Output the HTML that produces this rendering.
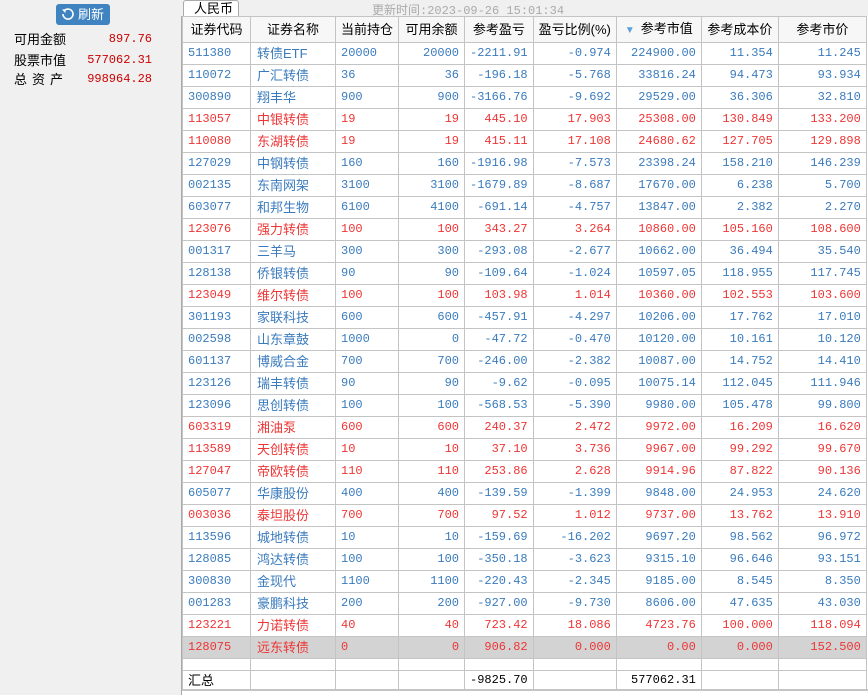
<!DOCTYPE html><html><head><meta charset="utf-8"><style>
body{margin:0;width:868px;height:695px;background:#f0f0f0;position:relative;overflow:hidden;font-family:"Liberation Sans","Noto Sans CJK SC",sans-serif;}
.btn{position:absolute;left:56px;top:4px;width:54px;height:21px;background:#3f83c1;border-radius:3px;color:#fff;font-size:13px;line-height:21px;text-align:right;box-sizing:border-box;padding-right:6px}
.btn svg{position:absolute;left:5px;top:3px}
.lbl{position:absolute;left:14px;font-size:13px;color:#000}
.val{position:absolute;right:716px;font-family:"Liberation Mono",monospace;font-size:12px;color:#c00}
.tab{position:absolute;left:183px;top:0;width:56px;height:17px;border:1px solid #aaa;border-bottom:none;border-radius:3px 3px 0 0;background:#fff;font-size:13px;line-height:16px;padding-left:10px;box-sizing:border-box}
.upd{position:absolute;left:372px;top:1px;font-size:12px;color:#aaa;font-family:"Liberation Mono","Noto Sans CJK SC",monospace}
.wrap{position:absolute;left:181px;top:16px;width:687px;height:679px;background:#fff;border-left:1px solid #aaa}
table{border-collapse:collapse;table-layout:fixed;position:absolute;left:0;top:0;background:#fff}
td,th{border:1px solid #c4c4c4;padding:0 5px;white-space:nowrap;overflow:hidden}
th{height:23px;line-height:23px;font-weight:normal;font-size:13px;background:#f7f7f7;color:#000;text-align:center}
td{height:21px;line-height:21px;font-size:12px;font-family:"Liberation Mono",monospace;color:#3a7bbd;text-align:right}
td:nth-child(1),td:nth-child(3){text-align:left}
td:nth-child(2){text-align:left;font-family:"Liberation Sans","Noto Sans CJK SC",sans-serif;font-size:13px;padding-left:6px}
tr.r td{color:#ee3535}
tr.g td{background:#d3d3d3}
tr.s td{color:#000;height:19px;line-height:19px}
tr.e td{height:11px;line-height:0;font-size:0}
.tri{color:#5aa0dc;font-size:10px;margin-right:6px}
</style></head><body>
<div class="btn"><svg width="14" height="14" viewBox="0 0 14 14"><path d="M3.5 3.5A5 5 0 1 1 2 7" fill="none" stroke="#fff" stroke-width="1.6"/><path d="M1 2.5L4.8 2.2L4.3 6Z" fill="#fff"/></svg>刷新</div>
<div class="lbl" style="top:29px">可用金额</div><div class="val" style="top:32px">897.76</div>
<div class="lbl" style="top:50px">股票市值</div><div class="val" style="top:53px">577062.31</div>
<div class="lbl" style="top:69px;letter-spacing:5px">总资产</div><div class="val" style="top:72px">998964.28</div>
<div class="tab">人民币</div>
<div class="upd">更新时间:2023-09-26 15:01:34</div>
<div class="wrap"><table>
<colgroup><col style="width:68px"><col style="width:85px"><col style="width:63px"><col style="width:66px"><col style="width:67px"><col style="width:81px"><col style="width:85px"><col style="width:77px"><col style="width:88px"></colgroup>
<tr><th>证券代码</th><th>证券名称</th><th>当前持仓</th><th>可用余额</th><th>参考盈亏</th><th>盈亏比例(%)</th><th><span class="tri">▼</span>参考市值</th><th>参考成本价</th><th>参考市价</th></tr>
<tr><td>511380</td><td>转债ETF</td><td>20000</td><td>20000</td><td>-2211.91</td><td>-0.974</td><td>224900.00</td><td>11.354</td><td>11.245</td></tr>
<tr><td>110072</td><td>广汇转债</td><td>36</td><td>36</td><td>-196.18</td><td>-5.768</td><td>33816.24</td><td>94.473</td><td>93.934</td></tr>
<tr><td>300890</td><td>翔丰华</td><td>900</td><td>900</td><td>-3166.76</td><td>-9.692</td><td>29529.00</td><td>36.306</td><td>32.810</td></tr>
<tr class="r"><td>113057</td><td>中银转债</td><td>19</td><td>19</td><td>445.10</td><td>17.903</td><td>25308.00</td><td>130.849</td><td>133.200</td></tr>
<tr class="r"><td>110080</td><td>东湖转债</td><td>19</td><td>19</td><td>415.11</td><td>17.108</td><td>24680.62</td><td>127.705</td><td>129.898</td></tr>
<tr><td>127029</td><td>中钢转债</td><td>160</td><td>160</td><td>-1916.98</td><td>-7.573</td><td>23398.24</td><td>158.210</td><td>146.239</td></tr>
<tr><td>002135</td><td>东南网架</td><td>3100</td><td>3100</td><td>-1679.89</td><td>-8.687</td><td>17670.00</td><td>6.238</td><td>5.700</td></tr>
<tr><td>603077</td><td>和邦生物</td><td>6100</td><td>4100</td><td>-691.14</td><td>-4.757</td><td>13847.00</td><td>2.382</td><td>2.270</td></tr>
<tr class="r"><td>123076</td><td>强力转债</td><td>100</td><td>100</td><td>343.27</td><td>3.264</td><td>10860.00</td><td>105.160</td><td>108.600</td></tr>
<tr><td>001317</td><td>三羊马</td><td>300</td><td>300</td><td>-293.08</td><td>-2.677</td><td>10662.00</td><td>36.494</td><td>35.540</td></tr>
<tr><td>128138</td><td>侨银转债</td><td>90</td><td>90</td><td>-109.64</td><td>-1.024</td><td>10597.05</td><td>118.955</td><td>117.745</td></tr>
<tr class="r"><td>123049</td><td>维尔转债</td><td>100</td><td>100</td><td>103.98</td><td>1.014</td><td>10360.00</td><td>102.553</td><td>103.600</td></tr>
<tr><td>301193</td><td>家联科技</td><td>600</td><td>600</td><td>-457.91</td><td>-4.297</td><td>10206.00</td><td>17.762</td><td>17.010</td></tr>
<tr><td>002598</td><td>山东章鼓</td><td>1000</td><td>0</td><td>-47.72</td><td>-0.470</td><td>10120.00</td><td>10.161</td><td>10.120</td></tr>
<tr><td>601137</td><td>博威合金</td><td>700</td><td>700</td><td>-246.00</td><td>-2.382</td><td>10087.00</td><td>14.752</td><td>14.410</td></tr>
<tr><td>123126</td><td>瑞丰转债</td><td>90</td><td>90</td><td>-9.62</td><td>-0.095</td><td>10075.14</td><td>112.045</td><td>111.946</td></tr>
<tr><td>123096</td><td>思创转债</td><td>100</td><td>100</td><td>-568.53</td><td>-5.390</td><td>9980.00</td><td>105.478</td><td>99.800</td></tr>
<tr class="r"><td>603319</td><td>湘油泵</td><td>600</td><td>600</td><td>240.37</td><td>2.472</td><td>9972.00</td><td>16.209</td><td>16.620</td></tr>
<tr class="r"><td>113589</td><td>天创转债</td><td>10</td><td>10</td><td>37.10</td><td>3.736</td><td>9967.00</td><td>99.292</td><td>99.670</td></tr>
<tr class="r"><td>127047</td><td>帝欧转债</td><td>110</td><td>110</td><td>253.86</td><td>2.628</td><td>9914.96</td><td>87.822</td><td>90.136</td></tr>
<tr><td>605077</td><td>华康股份</td><td>400</td><td>400</td><td>-139.59</td><td>-1.399</td><td>9848.00</td><td>24.953</td><td>24.620</td></tr>
<tr class="r"><td>003036</td><td>泰坦股份</td><td>700</td><td>700</td><td>97.52</td><td>1.012</td><td>9737.00</td><td>13.762</td><td>13.910</td></tr>
<tr><td>113596</td><td>城地转债</td><td>10</td><td>10</td><td>-159.69</td><td>-16.202</td><td>9697.20</td><td>98.562</td><td>96.972</td></tr>
<tr><td>128085</td><td>鸿达转债</td><td>100</td><td>100</td><td>-350.18</td><td>-3.623</td><td>9315.10</td><td>96.646</td><td>93.151</td></tr>
<tr><td>300830</td><td>金现代</td><td>1100</td><td>1100</td><td>-220.43</td><td>-2.345</td><td>9185.00</td><td>8.545</td><td>8.350</td></tr>
<tr><td>001283</td><td>豪鹏科技</td><td>200</td><td>200</td><td>-927.00</td><td>-9.730</td><td>8606.00</td><td>47.635</td><td>43.030</td></tr>
<tr class="r"><td>123221</td><td>力诺转债</td><td>40</td><td>40</td><td>723.42</td><td>18.086</td><td>4723.76</td><td>100.000</td><td>118.094</td></tr>
<tr class="r g"><td>128075</td><td>远东转债</td><td>0</td><td>0</td><td>906.82</td><td>0.000</td><td>0.00</td><td>0.000</td><td>152.500</td></tr>
<tr class="e"><td></td><td></td><td></td><td></td><td></td><td></td><td></td><td></td><td></td></tr>
<tr class="s"><td style="font-family:'Liberation Sans','Noto Sans CJK SC',sans-serif;font-size:13px">汇总</td><td></td><td></td><td></td><td>-9825.70</td><td></td><td>577062.31</td><td></td><td></td></tr>
</table>
<div style="position:absolute;left:0;top:673px;width:687px;height:2px;background:#c4c4c4"></div>
</div>
</body></html>
